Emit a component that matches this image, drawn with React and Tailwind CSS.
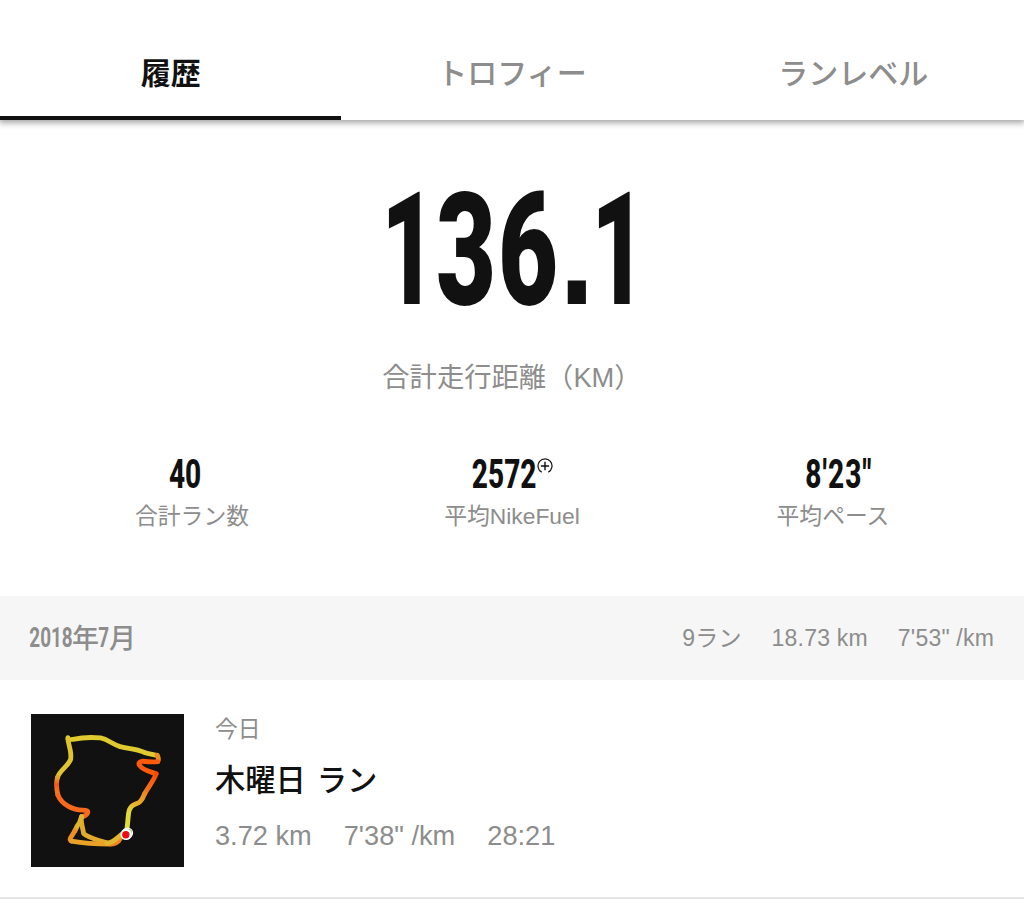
import React, { useState } from 'react';

const TABS = ['履歴', 'トロフィー', 'ランレベル'];

const SEGMENTS = [
  { d: 'M111 71 Q110 80 126 76 Q166 68 209 72 C233 77 240 89 268 98 C300 105 320 106 335 113 C350 120 365 121 379 124', color: '#dfca30' },
  { d: 'M379 124 Q386 133 381 143', color: '#ee8c22' },
  { d: 'M381 143 Q365 145 336 142 Q318 145 328 156 C335 168 360 174 376 180', color: '#ff5a0c' },
  { d: 'M376 180 C373 194 356 215 342 239', color: 'url(#heatDown)' },
  { d: 'M342 239 C331 267 323 267 313 271 C288 282 295 301 288 350', color: 'url(#fadeDown)' },
  { d: 'M111 76 C115 104 123 112 119 137 C109 160 88 167 80 190', color: '#dfc32f' },
  { d: 'M80 190 Q73 210 81 244', color: 'url(#leftSide)' },
  { d: 'M81 244 C92 272 126 289 156 289 Q174 289 170 298 Q166 306 153 309', color: '#f8691b' },
  { d: 'M152 309 C148 325 157 345 158 359 C170 372 205 381 236 389', color: '#e1ab2c' },
  { d: 'M152 308 L146 326 Q138 336 132 351', color: '#dfb52d' },
  { d: 'M132 351 L119 372 Q115 380 122 382', color: '#ed8f22' },
  { d: 'M122 382 Q170 391 239 391', color: '#e9a127' },
  { d: 'M239 391 Q254 391 264 381 L276 363', color: '#f38225' },
  { d: 'M228 389 C248 387 256 374 275 360', color: '#dfb730' },
];

function Condensed({ children, className }) {
  return (
    <span className={`flex justify-center whitespace-nowrap font-['Roboto'] ${className}`}>
      <span className="inline-block scale-x-[0.7]">{children}</span>
    </span>
  );
}

function FuelIcon() {
  return (
    <svg viewBox="0 0 16 16" className="mt-[5px] h-[16px] w-[16px]" fill="none" stroke="#111" strokeWidth="1.2">
      <path d="M4.7 14.1 A7 7 0 1 1 11.3 14.1" />
      <path d="M8 3.8v8.4M3.9 8h8.2" strokeWidth="1.4" />
    </svg>
  );
}

function RouteMap() {
  return (
    <svg viewBox="0 0 460 460" className="h-[153px] w-[153px] shrink-0 bg-[#111111]">
      <defs>
        <linearGradient id="heatDown" gradientUnits="userSpaceOnUse" x1="377" y1="179" x2="342" y2="239">
          <stop offset="0" stopColor="#ff4a08" />
          <stop offset="1" stopColor="#ee7c1f" />
        </linearGradient>
        <linearGradient id="fadeDown" gradientUnits="userSpaceOnUse" x1="342" y1="239" x2="295" y2="300">
          <stop offset="0" stopColor="#ee8721" />
          <stop offset="1" stopColor="#e0dc37" />
        </linearGradient>
        <linearGradient id="leftSide" gradientUnits="userSpaceOnUse" x1="79" y1="190" x2="81" y2="244">
          <stop offset="0" stopColor="#e6a52a" />
          <stop offset="0.4" stopColor="#f4571a" />
          <stop offset="1" stopColor="#f08a20" />
        </linearGradient>
      </defs>
      <g fill="none" strokeWidth="14.5" strokeLinecap="round" strokeLinejoin="round">
        {SEGMENTS.map((s, i) => (
          <path key={i} d={s.d} stroke={s.color} />
        ))}
      </g>
      <circle cx="290" cy="358" r="17" fill="#fff" />
      <circle cx="292" cy="357" r="12" fill="#8fd08b" />
      <circle cx="286" cy="362" r="17" fill="#fff" />
      <circle cx="285" cy="363" r="11" fill="#f00b13" />
    </svg>
  );
}

// the ones and the decimal point are set narrower than the other figures
function TotalDistance() {
  return (
    <div className="mt-[50px] flex h-[160px] justify-center pl-[4px] font-['Roboto'] text-[157px] leading-[160px] font-black text-[#111111]">
      <span className="flex w-[51px] justify-center"><span className="inline-block scale-x-[0.6]">1</span></span>
      <span className="flex w-[128px] justify-center"><span className="inline-block scale-x-[0.66] tracking-[3px]">36</span></span>
      <span className="ml-[3px] flex w-[24px] justify-center font-['Liberation_Sans'] font-bold"><span className="inline-block scale-x-[0.82]">.</span></span>
      <span className="ml-[3px] flex w-[54px] justify-center"><span className="inline-block scale-x-[0.6]">1</span></span>
    </div>
  );
}

export default function App() {
  const [active, setActive] = useState(TABS[0]);

  return (
    <div className="flex h-[899px] w-[1024px] flex-col overflow-hidden bg-white font-['Liberation_Sans','Noto_Sans_CJK_JP',sans-serif] text-[#8d8d8d]">
      {/* Tabs */}
      <nav className="grid h-[120px] shrink-0 grid-cols-3 shadow-[0_2px_6px_1px_rgba(0,0,0,0.35)]">
        {TABS.map(t => (
          <button
            key={t}
            onClick={() => setActive(t)}
            className={`border-b-4 pt-[27px] font-['Noto_Sans_CJK_JP'] text-[30px] ${active === t ? 'border-[#111111] font-bold text-[#111111]' : 'border-transparent font-medium'}`}
          >
            {t}
          </button>
        ))}
      </nav>

      {/* Totals */}
      <section className="flex h-[476px] shrink-0 flex-col">
        <TotalDistance />
        <p className="mt-[28px] h-[40px] text-center text-[27.3px] leading-[40px]">合計走行距離（KM）</p>
        <div className="mt-[55px] grid grid-cols-3 px-8 text-center text-[22.8px]">
          <div>
            <Condensed className="h-[44px] pr-[14px] text-[40px] leading-[44px] font-extrabold text-[#111111]">40</Condensed>
            <p className="leading-[38px]">合計ラン数</p>
          </div>
          <div>
            <div className="flex h-[44px] justify-center">
              <Condensed className="w-[65px] text-[40px] leading-[44px] font-extrabold text-[#111111]">2572</Condensed>
              <FuelIcon />
            </div>
            <p className="leading-[38px]">平均NikeFuel</p>
          </div>
          <div>
            <Condensed className="h-[44px] pl-[13px] text-[40px] leading-[44px] font-extrabold tracking-[1.5px] text-[#111111]">8'23"</Condensed>
            <p className="pl-[2px] leading-[38px]">平均ペース</p>
          </div>
        </div>
      </section>

      {/* Month header */}
      <header className="flex h-[84px] shrink-0 items-center justify-between bg-[#f6f6f6] px-[30px]">
        <h2 className="flex items-center pb-[2px] font-['Noto_Sans_CJK_JP'] text-[27px] leading-[40px] font-medium">
          <Condensed className="w-[42px] pt-[2px] text-[27px] font-bold">2018</Condensed>
          年
          <Condensed className="w-[10px] pt-[2px] text-[27px] font-bold">7</Condensed>
          月
        </h2>
        <div className="flex gap-[30px] text-[23px] tracking-[0.2px]">
          <span>9ラン</span>
          <span>18.73 km</span>
          <span>7'53" /km</span>
        </div>
      </header>

      {/* Run */}
      <article className="flex h-[219px] shrink-0 border-b-2 border-[#e5e5e5] px-[31px] pt-[34px]">
        <RouteMap />
        <div className="ml-[31px]">
          <p className="text-[22.8px] leading-[30px]">今日</p>
          <h3 className="mt-[12px] font-['Noto_Sans_CJK_JP'] text-[30.3px] leading-[44px] font-medium text-[#111111] [word-spacing:4px]">木曜日 ラン</h3>
          <div className="mt-[16px] flex gap-[32px] text-[27.2px] leading-[40px]">
            <span>3.72 km</span>
            <span>7'38" /km</span>
            <span>28:21</span>
          </div>
        </div>
      </article>
    </div>
  );
}
